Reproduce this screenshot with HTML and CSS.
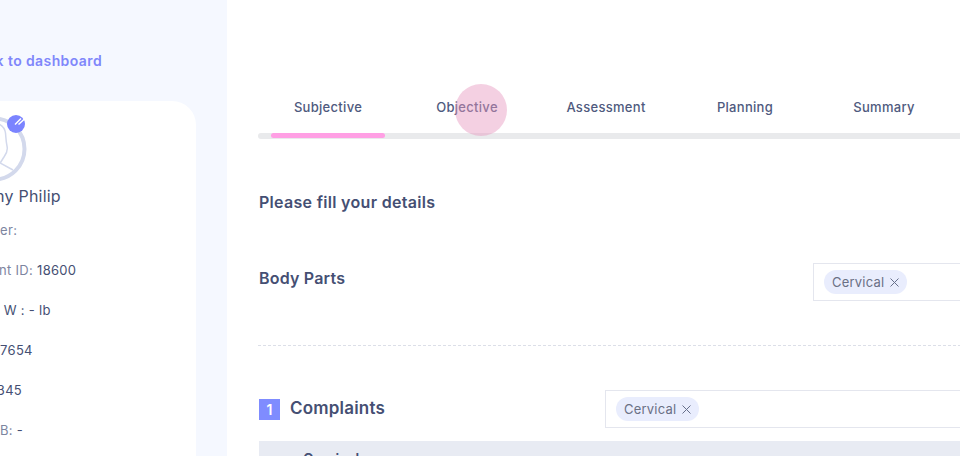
FILE: index.html
```html
<!DOCTYPE html>
<html lang="en">
<head>
    <meta charset="UTF-8">
    <meta name="viewport" content="width=device-width, initial-scale=1.0">
    <title>Subjective</title>
    <link rel="stylesheet" href="styles.css">
</head>
<body>
    <aside class="sidebar">
        <a class="back-link" href="#">Back to dashboard</a>
        <div class="patient-card">
            <div class="avatar">
                <svg class="avatar-ring" width="66" height="66" viewBox="0 0 66 66" fill="none" stroke="#d3d9ec">
                    <circle cx="33" cy="33" r="30.5" stroke-width="4"/>
                    <path d="M38 8c4 2 6 5 6.500 9 .5 5 .5 9 1.500 13 1 4 0 7-3 11-2 3-3 5-4 6l13 7" stroke-width="1.5"/>
                </svg>
                <span class="avatar-edit">
                    <svg class="edit-icon" width="18" height="18" viewBox="0 0 18 18" fill="none" stroke="#fff">
                        <path d="M8 9.500 14 3.500M11.500 9.500 18 3.500" stroke-width="1.5"/>
                    </svg>
                </span>
            </div>
            <h2 class="patient-name">Jimmy Philip</h2>
            <ul class="patient-info">
                <li>Gender:</li>
                <li>Patient ID: <b>18600</b></li>
                <li><span class="faded">Ht</span> W : - lb</li>
                <li>9987654</li>
                <li>12345</li>
                <li>DOB: <b>-</b></li>
            </ul>
        </div>
    </aside>
    <main class="content">
        <nav class="tabs">
            <a class="tab" href="#">Subjective</a>
            <a class="tab" href="#">Objective</a>
            <a class="tab" href="#">Assessment</a>
            <a class="tab" href="#">Planning</a>
            <a class="tab" href="#">Summary</a>
            <span class="touch-dot"></span>
        </nav>
        <div class="progress"><div class="progress-fill"></div></div>
        <h3 class="form-title">Please fill your details</h3>
        <section class="body-parts">
            <h4 class="field-label">Body Parts</h4>
            <div class="select-box body-select">
                <span class="chip">Cervical
                    <svg class="chip-x" width="9" height="9" viewBox="0 0 9 9" stroke="#666f8a"><path d="M.5.5l8 8M8.5.5l-8 8"/></svg>
                </span>
            </div>
        </section>
        <section class="complaints">
            <div class="section-title">
                <span class="num">1</span>
                <h4 class="field-label complaints-label">Complaints</h4>
            </div>
            <div class="select-box complaint-select">
                <span class="chip">Cervical
                    <svg class="chip-x" width="9" height="9" viewBox="0 0 9 9" stroke="#666f8a"><path d="M.5.5l8 8M8.5.5l-8 8"/></svg>
                </span>
            </div>
        </section>
        <div class="table-head">Cervical</div>
    </main>
</body>
</html>
```

FILE: styles.css
```css
html, body {
    height: 100%;
}
body {
    display: flex;
    margin: 0;
    height: 456px;
    overflow: hidden;
    background-color: #fff;
    color: #454f73;
    font-family: "Inter", "Liberation Sans", sans-serif;
}
.sidebar {
    flex: 0 0 227px;
    height: 456px;
    overflow: hidden;
    background-color: #f5f8ff;
}
.back-link {
    display: block;
    margin: 52px 0 0 -31px;
    color: #8087fb;
    font-size: 14px;
    font-weight: 600;
    line-height: 18px;
    letter-spacing: 0.4px;
    white-space: nowrap;
    text-decoration: none;
}
.patient-card {
    box-sizing: border-box;
    width: 256px;
    height: 400px;
    margin: 31px 0 0 -60px;
    padding: 15px 0 0 60px;
    border-radius: 24px 24px 0 0;
    background-color: #fff;
}
.avatar {
    position: relative;
    width: 66px;
    height: 66px;
    margin-left: -39px;
}
.avatar-ring {
    display: block;
}
.avatar-edit {
    position: absolute;
    top: -1px;
    right: 2px;
    width: 18px;
    height: 18px;
    border-radius: 50%;
    background-color: #7b84ff;
}
.edit-icon {
    display: block;
}
.patient-name {
    margin: 3px 0 0 -37px;
    font-size: 16px;
    font-weight: 400;
    line-height: 22px;
    letter-spacing: 0.2px;
    white-space: nowrap;
}
.patient-info {
    margin: 13px 0 0;
    padding: 0;
    list-style: none;
    font-size: 13px;
    line-height: 20px;
    letter-spacing: 0.3px;
    white-space: nowrap;
}
.patient-info li {
    margin-bottom: 20px;
}
.patient-info b {
    color: #454f73;
    font-weight: 400;
}
.patient-info li:nth-child(1) {
    margin-left: -34px;
    color: #7d859f;
}
.patient-info li:nth-child(2) {
    margin-left: -33px;
    color: #7d859f;
}
.patient-info li:nth-child(3) {
    margin-left: -15px;
}
.faded {
    color: #b5bacb;
}
.patient-info li:nth-child(4) {
    margin-left: -25px;
}
.patient-info li:nth-child(5) {
    margin-left: -17px;
}
.patient-info li:nth-child(6) {
    margin-left: -20px;
    color: #7d859f;
}
.content {
    flex: 0 0 702px;
    padding-top: 88px;
    padding-left: 31px;
}
.tabs {
    position: relative;
    display: flex;
    height: 40px;
    margin-left: 0.5px;
}
.tab {
    flex: 0 0 139px;
    color: #4f5a7e;
    font-size: 13px;
    font-weight: 500;
    line-height: 39px;
    letter-spacing: 0.3px;
    text-align: center;
    text-decoration: none;
}
.touch-dot {
    position: absolute;
    top: -4px;
    left: 196px;
    width: 52px;
    height: 52px;
    border-radius: 50%;
    background-color: rgba(230, 150, 190, 0.45);
}
.progress {
    height: 6px;
    margin-top: 5px;
    border-radius: 3px 0 0 3px;
    background-color: #e9eaec;
}
.progress-fill {
    width: 114px;
    height: 5px;
    margin-left: 13px;
    border-radius: 3px;
    background-color: #ff9fe4;
}
.form-title {
    margin: 53px 0 0 1px;
    font-size: 16px;
    font-weight: 600;
    line-height: 20px;
    letter-spacing: 0.3px;
}
.body-parts {
    display: flex;
    justify-content: space-between;
    height: 81px;
    margin-top: 52px;
    padding-left: 1px;
    border-bottom: 1px dashed #dcdfe8;
}
.field-label {
    margin: 0;
    font-size: 16px;
    font-weight: 600;
    line-height: 28px;
    letter-spacing: 0.2px;
}
.complaints-label {
    margin-bottom: 2px;
    font-size: 17px;
}
.select-box {
    box-sizing: border-box;
    display: flex;
    align-items: center;
    height: 38px;
    padding-left: 10px;
    border: 1px solid #e4e6ee;
}
.body-select {
    flex: 0 0 300px;
    margin-top: -1px;
    margin-right: -152px;
}
.chip {
    display: inline-flex;
    align-items: center;
    gap: 6px;
    height: 24px;
    padding: 0 8px;
    border-radius: 12px;
    background-color: #e9edfd;
    color: #6a7085;
    font-size: 13px;
    letter-spacing: 0.2px;
    white-space: nowrap;
}
.complaints {
    display: flex;
    margin-top: 44px;
    padding-left: 1px;
}
.section-title {
    display: flex;
    flex: 0 0 346px;
    align-items: center;
    gap: 10px;
    height: 38px;
}
.num {
    width: 21px;
    height: 21px;
    margin-top: 1px;
    background-color: #7f8cff;
    color: #fff;
    font-size: 14px;
    font-weight: 600;
    line-height: 21px;
    text-align: center;
}
.complaint-select {
    flex: 0 0 356px;
}
.table-head {
    height: 60px;
    margin-top: 13px;
    margin-left: 1px;
    padding: 9px 0 0 44px;
    background-color: #e8ebf3;
    font-size: 14px;
    font-weight: 600;
}
```
